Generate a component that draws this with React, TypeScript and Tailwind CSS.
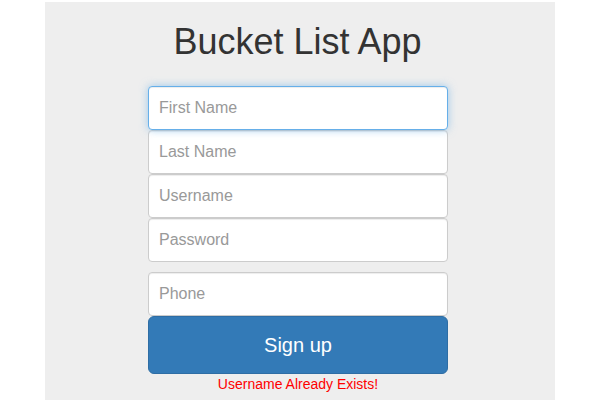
import React from 'react';

const fields = [
    { name: 'firstName', placeholder: 'First Name', type: 'text' },
    { name: 'lastName', placeholder: 'Last Name', type: 'text' },
    { name: 'username', placeholder: 'Username', type: 'text' },
    { name: 'password', placeholder: 'Password', type: 'password' },
];

const inputBase =
    'block w-full h-[44px] px-[10px] bg-white text-[16px] text-[#555] placeholder:text-[#999] border rounded-[4px] outline-none';

const App: React.FC = () => {
    return (
        <div className="min-h-[400px] bg-white pt-[2px] font-['Liberation_Sans',Arial,sans-serif]">
            <div className="mx-auto w-[510px] min-h-[398px] bg-[#eee] pt-[20px]">
                <h1 className="pr-[5px] text-center text-[36px] leading-[40px] font-normal text-[#333]">
                    Bucket List App
                </h1>
                <form className="ml-[103px] mt-[24px] w-[300px]" onSubmit={(e) => e.preventDefault()}>
                    {fields.map((field, i) => (
                        <input
                            key={field.name}
                            name={field.name}
                            type={field.type}
                            placeholder={field.placeholder}
                            className={
                                i === 0
                                    ? `${inputBase} relative z-10 border-[#66afe9] shadow-[inset_0_1px_1px_rgba(0,0,0,0.075),0_0_8px_rgba(102,175,233,0.6)]`
                                    : `${inputBase} border-[#ccc] shadow-[inset_0_1px_1px_rgba(0,0,0,0.075)]`
                            }
                        />
                    ))}
                    <input
                        name="phone"
                        type="text"
                        placeholder="Phone"
                        className={`${inputBase} mt-[10px] border-[#ccc] shadow-[inset_0_1px_1px_rgba(0,0,0,0.075)]`}
                    />
                    <button
                        type="submit"
                        className="block w-full h-[58px] bg-[#337ab7] border border-[#2e6da4] rounded-[6px] text-white text-[20px]"
                    >
                        Sign up
                    </button>
                    <p className="text-center text-[14px] leading-[20px] text-[#f00]">
                        Username Already Exists!
                    </p>
                </form>
            </div>
        </div>
    );
};

export default App;
